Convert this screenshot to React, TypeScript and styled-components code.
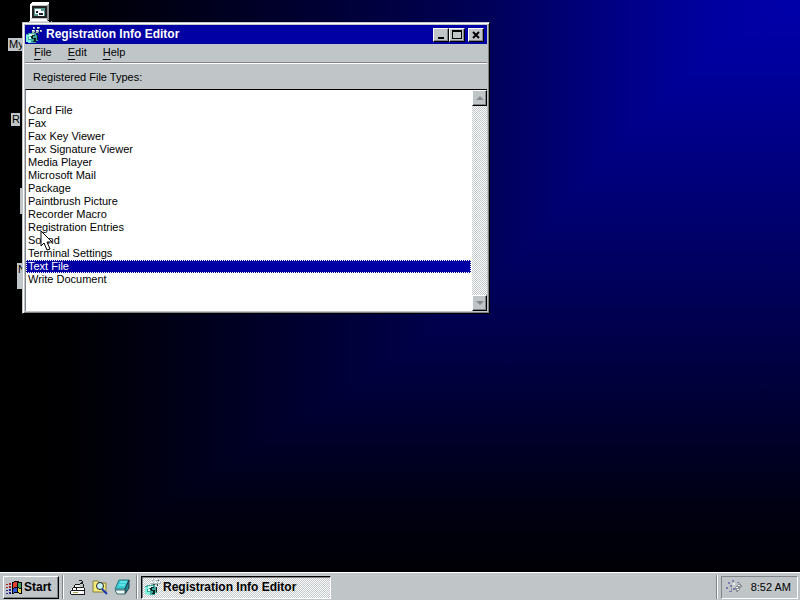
import React from "react";
import styled, { createGlobalStyle, css } from "styled-components";

const GlobalStyle = createGlobalStyle`
  * { box-sizing: border-box; }
  html, body, #root { height: 100%; }
  body {
    margin: 0;
    overflow: hidden;
    font-family: "Liberation Sans", Arial, sans-serif;
    font-size: 11px;
    line-height: 13px;
    color: #000;
  }
  button { font: inherit; color: inherit; padding: 0; margin: 0; border-radius: 0; }
`;

const face = "#c0c6c8";

const raised = css`
  border: 1px solid;
  border-color: #fff #000 #000 #fff;
  box-shadow: inset -1px -1px 0 #808488;
  background: ${face};
`;

const dither = css`
  background: repeating-conic-gradient(#fff 0 25%, #c0c6c8 0 50%) 0 0 / 2px 2px;
`;

const Screen = styled.div`
  height: 100vh;
  display: flex;
  flex-direction: column;
  overflow: hidden;
`;

const Desktop = styled.main`
  flex: 1;
  min-height: 0;
  position: relative;
  background:
    linear-gradient(to right, #000 0%, #000002 8%, #000014 20%, #00002c 35%, #000044 50%, #00005c 62%, #000082 76%, #00009e 88%, #0000aa 100%),
    linear-gradient(to top, #000004 0%, #000014 12%, #000036 30%, #00005a 50%, #000080 72%, #00009c 88%, #0000aa 100%);
  background-blend-mode: darken;
`;

const Shortcut = styled.button<{ $x: number; $y: number }>`
  position: absolute;
  left: ${(p) => p.$x}px;
  top: ${(p) => p.$y}px;
  display: flex;
  border: 0;
  background: none;
`;

const ShortcutLabel = styled.span<{ $tall?: boolean }>`
  min-height: ${(p) => (p.$tall ? 26 : 13)}px;
  min-width: 4px;
  max-width: 14px;
  padding-left: 1px;
  overflow: hidden;
  background: ${face};
  white-space: nowrap;
`;

const Window = styled.section`
  position: absolute;
  left: 22px;
  top: 22px;
  width: 468px;
  height: 292px;
  display: flex;
  flex-direction: column;
  padding: 2px;
  border: 1px solid;
  border-color: ${face} #000 #000 ${face};
  box-shadow: inset 1px 1px 0 #fff, inset -1px -1px 0 #808488;
  background: ${face};
`;

const TitleBar = styled.header`
  display: flex;
  align-items: center;
  height: 19px;
  padding-right: 3px;
  background: #0000a4;
  color: #fff;
`;

const Title = styled.h1`
  flex: 1;
  margin: 0 0 0 3px;
  padding-bottom: 1px;
  font-size: 12px;
  line-height: 14px;
  font-weight: bold;
`;

const Caption = styled.button<{ $spaced?: boolean }>`
  ${raised}
  width: 16px;
  height: 14px;
  margin-left: ${(p) => (p.$spaced ? 3 : 0)}px;
  display: grid;
  place-items: center;
`;

const MenuBar = styled.nav`
  display: flex;
  align-items: flex-start;
  height: 19px;
  padding: 1px 3px;
  border-bottom: 1px solid #808488;
`;

const MenuItem = styled.button`
  border: 0;
  background: none;
  padding: 0 6px;
  margin-right: 4px;
  line-height: 14px;
  text-underline-offset: 3px;
`;

const ListHeading = styled.div`
  height: 26px;
  padding: 7px 8px 0;
  border-top: 1px solid #fff;
`;

const ListPane = styled.div`
  flex: 1;
  min-height: 0;
  display: flex;
  border-top: 1px solid #000;
  border-left: 1px solid #808488;
  background: #fff;
`;

const FileTypes = styled.ul`
  flex: 1;
  margin: 0;
  padding: 14px 1px 0 0;
  list-style: none;
`;

const FileType = styled.li<{ $selected?: boolean }>`
  height: 13px;
  padding-left: 2px;
  line-height: 13px;
  ${(p) =>
    p.$selected &&
    css`
      background: #0000a4;
      color: #fff;
      outline: 1px dotted #fff;
      outline-offset: -1px;
    `}
`;

const ScrollTrack = styled.div`
  ${dither}
  width: 15px;
  display: flex;
  flex-direction: column;
  justify-content: space-between;
`;

const ScrollButton = styled.button`
  ${raised}
  height: 16px;
  display: grid;
  place-items: center;
`;

const Cursor = styled.svg`
  position: absolute;
  left: 40px;
  top: 230px;
  pointer-events: none;
`;

const Taskbar = styled.footer`
  display: flex;
  align-items: center;
  height: 28px;
  padding: 1px 2px 0 3px;
  border-top: 1px solid #fff;
  background: ${face};
`;

const StartButton = styled.button`
  ${raised}
  display: flex;
  align-items: center;
  gap: 1px;
  width: 56px;
  height: 23px;
  padding-left: 2px;
  font-size: 12px;
  font-weight: bold;
`;

const Divider = styled.span`
  width: 2px;
  height: 24px;
  margin: 0 3px;
  border-left: 1px solid #808488;
  border-right: 1px solid #fff;
`;

const QuickLaunch = styled.div`
  display: flex;
  gap: 6px;
  padding: 0 3px;
`;

const QuickButton = styled.button`
  display: flex;
  border: 0;
  background: none;
`;

const TaskButton = styled.button`
  ${dither}
  display: flex;
  align-items: center;
  gap: 1px;
  width: 190px;
  height: 23px;
  padding-left: 2px;
  border: 1px solid;
  border-color: #000 #fff #fff #000;
  box-shadow: inset 1px 1px 0 #808488;
  font-size: 12px;
  font-weight: bold;
  white-space: nowrap;
`;

const Spacer = styled.span`
  flex: 1;
`;

const Tray = styled.div`
  display: flex;
  align-items: center;
  justify-content: space-between;
  width: 77px;
  height: 23px;
  padding: 0 6px 0 3px;
  border: 1px solid;
  border-color: #808488 #fff #fff #808488;
`;

const RegIcon = () => (
  <svg width="18" height="18" viewBox="0 0 18 18" shapeRendering="crispEdges" aria-hidden="true">
    <path d="M1 8h2V7h8v2h2v6h-2v2H3v-1H1z" fill="#3aa89c" />
    <path d="M1 9h4v2H3v3h3v3H3v-1H1z" fill="#7df0e0" />
    <path d="M4 8h5v2H4zM4 11h2v2H4z" fill="#d2f6f2" />
    <path d="M7 9h3v1H8v2h3v4H8v-1h1v-2H7v-1H6v-2h1zM12 9h1v5h-1z" fill="#0c2424" />
    <path d="M7 4h3v3H7zM11 4h3v3h-3zM12 1h3v2h-3zM15 4h2v2h-2zM8 1h2v2H8z" fill="#9fb4b4" />
    <path d="M7 4h2v1H7zM11 4h2v1h-2zM12 1h2v1h-2zM15 4h1v1h-1zM8 1h1v1H8z" fill="#fff" />
    <path d="M9 6h2v1H9zM13 6h1v2h-1zM14 2h1v1h-1z" fill="#3c4c50" />
  </svg>
);

const ComputerIcon = () => (
  <svg width="24" height="22" viewBox="0 0 24 22" shapeRendering="crispEdges" aria-hidden="true">
    <path d="M1 2l2-2h17v17l-2 2H1z" fill="#fff" />
    <path d="M3 3h15v14H2v-1h1z" fill="#c0c6c8" />
    <path d="M18 3l2-2v16l-2 2z" fill="#8a8e90" />
    <path d="M3 4h15v12H3z" fill="#222" />
    <path d="M5 6h11v8H5z" fill="#589590" />
    <path d="M6 7h6v5H6zM9 9h6v5H9z" fill="#fff" />
    <path d="M7 9h2v2H7zM10 11h4v2h-4z" fill="#123" />
    <path d="M0 19h20v2H0z" fill="#d8dcdc" />
    <path d="M20 21l3-3v3z" fill="#aaa" />
  </svg>
);

const FlagIcon = () => (
  <svg width="17" height="15" viewBox="0 0 17 15" shapeRendering="crispEdges" aria-hidden="true">
    <path d="M6 2l3-1h3l2 1h2v12h-2l-2-1H9l-3 1z" fill="#000" />
    <path d="M7 3l2-1h2v5H9L7 8z" fill="#e0412e" />
    <path d="M12 3h3v5h-2l-1-1z" fill="#42a45a" />
    <path d="M7 9l2-1h2v4H9l-2 1z" fill="#3155d4" />
    <path d="M12 8l1 1h2v4h-2l-1-1z" fill="#ead945" />
    <path d="M3 3h2v2H3zM3 6h2v2H3zM0 4h2v1H0zM0 7h2v1H0z" fill="#a22" />
    <path d="M3 9h2v2H3zM3 12h2v2H3zM0 10h2v1H0zM0 13h2v1H0z" fill="#229" />
  </svg>
);

const DesktopIcon = () => (
  <svg width="16" height="16" viewBox="0 0 16 16" shapeRendering="crispEdges" aria-hidden="true">
    <path d="M2 9h12l1 2v3l-1 1H1v-3z" fill="#fff" />
    <path d="M5 5h5v1H5zM4 6h1v2H4zM3 8h10v1H3zM10 4h2v1h-2zM11 3h2v1h-2zM9 1h3v1H9zM12 2h1v3h-1zM13 5h1v4h-1zM2 9h1v2H2zM1 11h13v1H1zM14 9h1v6h-1zM1 15h14v1H1zM0 12h1v3H0zM6 9h1v2H6z" fill="#1c1c1c" />
    <path d="M3 13h5v1H3z" fill="#a3a34c" />
    <path d="M5 6h5v2H5z" fill="#e8eded" />
  </svg>
);

const SearchIcon = () => (
  <svg width="16" height="16" viewBox="0 0 16 16" aria-hidden="true">
    <path d="M1 2h5l1 2h7v9H1z" fill="#f5ec80" stroke="#858038" />
    <circle cx="8" cy="7" r="3.5" fill="#c5f5f8" stroke="#222" />
    <path d="M10 10l5 5" stroke="#1738b4" strokeWidth="2" />
  </svg>
);

const NotesIcon = () => (
  <svg width="16" height="16" viewBox="0 0 16 16" aria-hidden="true">
    <path d="M5 1h10l-4 9H1z" fill="#35cbd3" stroke="#28777c" />
    <path d="M15 1v8l-4 6v-5z" fill="#1f8d94" stroke="#234" />
    <path d="M1 11h10v4H3z" fill="#e8ffff" stroke="#466" />
    <path d="M6 3h7M5 6h6" stroke="#8ff5f5" />
  </svg>
);

const TrayIcon = () => (
  <svg width="18" height="16" viewBox="0 0 18 16" shapeRendering="crispEdges" aria-hidden="true">
    <path d="M3 3h2v2H3zM7 1h2v2H7zM12 3h2v1h-2zM1 8h2v2H1zM5 6h2v2H5zM4 12h3v1H4zM8 9h2v2H8z" fill="#7779b0" />
    <path d="M10 8l4-4 3 3-4 6h-2zM6 9h1v3H6z" fill="#8b9092" />
    <path d="M11 8h2v1h-2zM13 6h2v1h-2zM8 4h2v2H8zM12 10h2v1h-2z" fill="#f1f3f3" />
  </svg>
);

const fileTypes = [
  "Card File",
  "Fax",
  "Fax Key Viewer",
  "Fax Signature Viewer",
  "Media Player",
  "Microsoft Mail",
  "Package",
  "Paintbrush Picture",
  "Recorder Macro",
  "Registration Entries",
  "Sound",
  "Terminal Settings",
  "Text File",
  "Write Document",
];

export default function App() {
  return (
    <Screen>
      <GlobalStyle />
      <Desktop>
        <Shortcut $x={29} $y={2} aria-label="Open My Computer">
          <ComputerIcon />
        </Shortcut>
        <Shortcut $x={8} $y={38} aria-label="My Computer">
          <ShortcutLabel>My</ShortcutLabel>
        </Shortcut>
        <Shortcut $x={11} $y={113} aria-label="Recycle Bin">
          <ShortcutLabel>R</ShortcutLabel>
        </Shortcut>
        <Shortcut $x={20} $y={188} aria-label="Internet">
          <ShortcutLabel $tall />
        </Shortcut>
        <Shortcut $x={17} $y={263} aria-label="Network">
          <ShortcutLabel $tall>N</ShortcutLabel>
        </Shortcut>

        <Window aria-label="Registration Info Editor">
          <TitleBar>
            <RegIcon />
            <Title>Registration Info Editor</Title>
            <Caption aria-label="Minimize">
              <svg width="10" height="8" shapeRendering="crispEdges"><path d="M2 6h6v2H2z" /></svg>
            </Caption>
            <Caption aria-label="Maximize">
              <svg width="10" height="9" shapeRendering="crispEdges"><path d="M0 0h10v9H0zM1 2v6h8V2z" fillRule="evenodd" /></svg>
            </Caption>
            <Caption aria-label="Close" $spaced>
              <svg width="8" height="8"><path d="M1 1l6 6M7 1l-6 6" stroke="#000" strokeWidth="2" /></svg>
            </Caption>
          </TitleBar>
          <MenuBar>
            <MenuItem><u>F</u>ile</MenuItem>
            <MenuItem><u>E</u>dit</MenuItem>
            <MenuItem><u>H</u>elp</MenuItem>
          </MenuBar>
          <ListHeading id="types-label">Registered File Types:</ListHeading>
          <ListPane>
            <FileTypes role="listbox" aria-labelledby="types-label">
              {fileTypes.map((name) => (
                <FileType key={name} role="option" aria-selected={name === "Text File"} $selected={name === "Text File"}>
                  {name}
                </FileType>
              ))}
            </FileTypes>
            <ScrollTrack>
              <ScrollButton aria-label="Scroll up">
                <svg width="8" height="5"><path d="M4 0l4 4H0z" fill="#85898b" /></svg>
              </ScrollButton>
              <ScrollButton aria-label="Scroll down">
                <svg width="8" height="5"><path d="M0 0h8L4 4z" fill="#85898b" /></svg>
              </ScrollButton>
            </ScrollTrack>
          </ListPane>
        </Window>
        <Cursor width="13" height="21" viewBox="0 0 13 21" aria-hidden="true">
          <path d="M1 1v15l3-3 3 7 3-1-3-7h5z" fill="#fff" stroke="#000" />
        </Cursor>
      </Desktop>

      <Taskbar>
        <StartButton><FlagIcon />Start</StartButton>
        <Divider />
        <QuickLaunch>
          <QuickButton aria-label="Show Desktop"><DesktopIcon /></QuickButton>
          <QuickButton aria-label="Find"><SearchIcon /></QuickButton>
          <QuickButton aria-label="Notes"><NotesIcon /></QuickButton>
        </QuickLaunch>
        <Divider />
        <TaskButton><RegIcon />Registration Info Editor</TaskButton>
        <Spacer />
        <Divider />
        <Tray><TrayIcon /><time>8:52 AM</time></Tray>
      </Taskbar>
    </Screen>
  );
}
